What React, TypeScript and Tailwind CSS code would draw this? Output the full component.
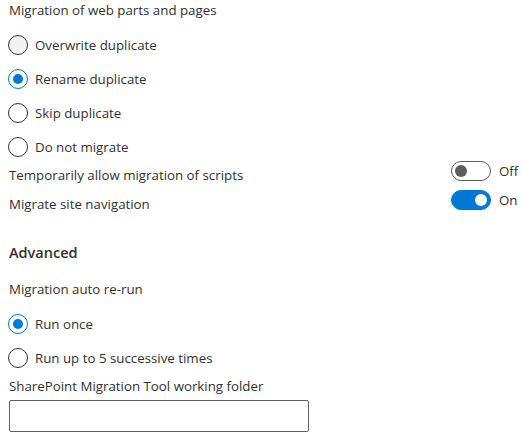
import React, { useState } from 'react';

const font = { fontFamily: '"Segoe UI", "Open Sans", "Liberation Sans", sans-serif' };

function Radio({ label, checked, hover, onClick }: { label: string; checked: boolean; hover?: boolean; onClick: () => void }) {
  return (
    <div onClick={onClick} className="flex items-center h-[24px] cursor-pointer">
      <div
        className={`w-[20px] h-[20px] rounded-full border flex items-center justify-center flex-shrink-0 ${checked ? 'border-[#0078d4]' : 'border-[#323130]'} ${hover && !checked ? 'bg-[#f3f2f1]' : 'bg-white'}`}
      >
        {checked && <div className="w-[10px] h-[10px] rounded-full bg-[#0078d4]" />}
      </div>
      <span className="ml-[7px] text-[13.3px] leading-[20px] text-[#323130]">{label}</span>
    </div>
  );
}

function Toggle({ label, on, onClick }: { label: string; on: boolean; onClick: () => void }) {
  return (
    <div className="flex items-center h-[20px]">
      <span className="pt-[8px] ml-[1px] text-[13.3px] leading-[20px] text-[#323130]">{label}</span>
      <div className="ml-auto w-[72px] flex items-center">
        <button
          onClick={onClick}
          className={`w-[40px] h-[20px] rounded-full border flex items-center px-[3px] ${on ? 'bg-[#0078d4] border-[#0078d4] justify-end' : 'bg-white border-[#605e5c] justify-start'}`}
        >
          <div className={`w-[12px] h-[12px] rounded-full ${on ? 'bg-white' : 'bg-[#605e5c]'}`} />
        </button>
        <span className="ml-[8px] text-[13.3px] leading-[20px] text-[#323130]">{on ? 'On' : 'Off'}</span>
      </div>
    </div>
  );
}

export default function App() {
  const [dup, setDup] = useState('rename');
  const [scripts, setScripts] = useState(false);
  const [nav, setNav] = useState(true);
  const [rerun, setRerun] = useState('once');

  return (
    <div style={font} className="w-[523px] h-[438px] bg-white pl-[8px] overflow-hidden">
      <div className="ml-[1px] h-[20px] text-[13.3px] leading-[20px] text-[#323130]">Migration of web parts and pages</div>

      <div className="mt-[13px] flex flex-col gap-[10px]">
        <Radio label="Overwrite duplicate" checked={dup === 'overwrite'} hover onClick={() => setDup('overwrite')} />
        <Radio label="Rename duplicate" checked={dup === 'rename'} onClick={() => setDup('rename')} />
        <Radio label="Skip duplicate" checked={dup === 'skip'} onClick={() => setDup('skip')} />
        <Radio label="Do not migrate" checked={dup === 'none'} onClick={() => setDup('none')} />
      </div>

      <div className="mt-[2px] flex flex-col gap-[9px]">
        <Toggle label="Temporarily allow migration of scripts" on={scripts} onClick={() => setScripts(!scripts)} />
        <Toggle label="Migrate site navigation" on={nav} onClick={() => setNav(!nav)} />
      </div>

      <div className="mt-[32px] ml-[1px] h-[22px] text-[14.5px] leading-[22px] font-semibold text-[#323130]">Advanced</div>

      <div className="mt-[15px] ml-[1px] h-[20px] text-[13.3px] leading-[20px] text-[#323130]">Migration auto re-run</div>

      <div className="mt-[13px] flex flex-col gap-[10px]">
        <Radio label="Run once" checked={rerun === 'once'} onClick={() => setRerun('once')} />
        <Radio label="Run up to 5 successive times" checked={rerun === 'five'} onClick={() => setRerun('five')} />
      </div>

      <div className="mt-[6px] ml-[1px] h-[20px] text-[13.3px] leading-[20px] text-[#323130]">SharePoint Migration Tool working folder</div>

      <input
        type="text"
        className="mt-[4px] ml-[1px] block w-[300px] h-[32px] border border-[#605e5c] rounded-[2px] px-[8px] text-[13.3px] outline-none"
      />
    </div>
  );
}
